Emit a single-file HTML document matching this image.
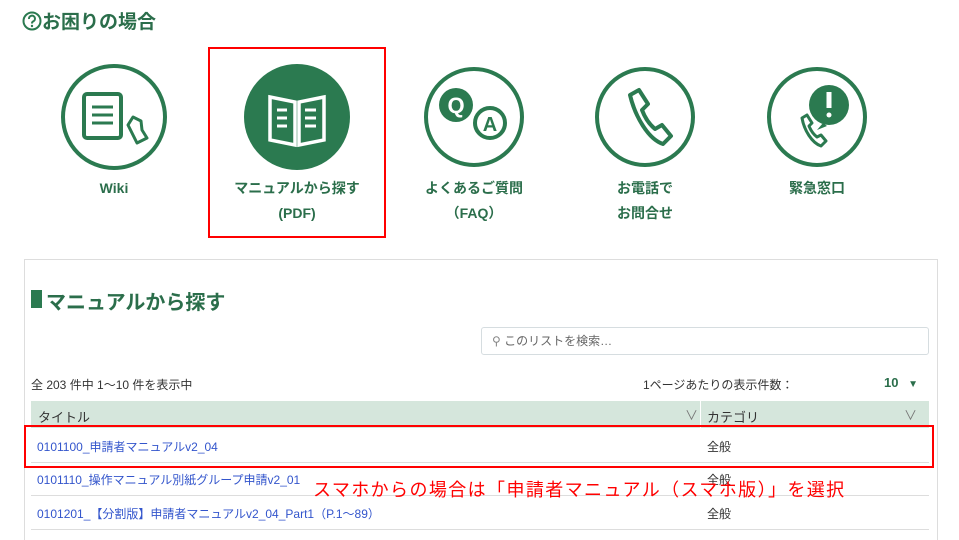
<!DOCTYPE html>
<html><head><meta charset="utf-8"><style>
body{margin:0;width:959px;height:525px;overflow:hidden;background:#fff;font-family:"Liberation Sans","Noto Sans CJK JP",sans-serif;position:relative}
.a{position:absolute}
.lbl{position:absolute;width:170px;text-align:center;font-size:14px;font-weight:bold;color:#2b6e4b;line-height:25px}
.row{position:absolute;left:31px;width:898px;height:33px;border-bottom:1px solid #ddd;font-size:12px}
.row span{position:absolute;top:9px}
</style></head><body>
<div class="a" style="left:22px;top:7px;font-size:19px;font-weight:bold;color:#2b6e4b">
<svg width="20" height="20" viewBox="0 0 20 20" style="vertical-align:-3px"><circle cx="10" cy="10" r="8.5" fill="none" stroke="#2b7a50" stroke-width="2"/><path d="M7 8a3 3 0 1 1 4 2.5c-1 .5-1 1-1 2" fill="none" stroke="#2b7a50" stroke-width="2"/><circle cx="10" cy="15" r="1.2" fill="#2b7a50"/></svg>お困りの場合</div>

<svg class="a" style="left:0;top:0" width="959" height="240">
<g fill="none" stroke="#2b7a50" stroke-width="4">
<circle cx="114" cy="117" r="51"/>
<circle cx="474" cy="117" r="48"/>
<circle cx="645" cy="117" r="48"/>
<circle cx="817" cy="117" r="48"/>
</g>
<circle cx="297" cy="117" r="53" fill="#2b7a50"/>
<rect x="84" y="94" width="37" height="44" rx="3" fill="none" stroke="#2b7a50" stroke-width="4"/>
<path d="M92 107h21M92 115h21M92 123h21" stroke="#2b7a50" stroke-width="3"/>
<path d="M128 125l5-8 8 4 1 9 5 8-10 5z" fill="none" stroke="#2b7a50" stroke-width="3" stroke-linejoin="round"/>
<path d="M270 97l25 5v43l-25-5zM324 97l-25 5v43l25-5z" fill="none" stroke="#fff" stroke-width="3.5"/>
<path d="M277 110h10M277 118h10M277 126h10M305 110h11M305 118h11M305 126h11" stroke="#fff" stroke-width="3"/>
<circle cx="456" cy="105" r="17" fill="#2b7a50"/>
<text x="456" y="113" text-anchor="middle" font-family="Liberation Sans" font-weight="bold" font-size="22" fill="#fff">Q</text>
<circle cx="490" cy="123" r="15" fill="#fff" stroke="#2b7a50" stroke-width="4"/>
<text x="490" y="131" text-anchor="middle" font-family="Liberation Sans" font-weight="bold" font-size="20" fill="#2b7a50">A</text>
<path d="M630 95l9-5 9 14-6 6c3 8 7 14 13 19l7-4 9 11-8 8c-15-5-28-28-33-49z" fill="none" stroke="#2b7a50" stroke-width="4" stroke-linejoin="round"/>
<circle cx="829" cy="105" r="20" fill="#2b7a50"/>
<path d="M823 123l-6 7 10-4z" fill="#2b7a50"/>
<path d="M829 92v16" stroke="#fff" stroke-width="5"/><circle cx="829" cy="115" r="2.5" fill="#fff"/>
<path d="M802 118l5-3 5 8-3 3c2 5 4 8 8 11l4-2 5 6-5 5c-9-3-17-16-19-28z" fill="none" stroke="#2b7a50" stroke-width="3" stroke-linejoin="round"/>
</svg>

<div class="lbl" style="left:29px;top:176px">Wiki</div>
<div class="lbl" style="left:212px;top:176px">マニュアルから探す<br>(PDF)</div>
<div class="lbl" style="left:389px;top:176px">よくあるご質問<br>（FAQ）</div>
<div class="lbl" style="left:560px;top:176px">お電話で<br>お問合せ</div>
<div class="lbl" style="left:732px;top:176px">緊急窓口</div>

<div class="a" style="left:208px;top:47px;width:174px;height:187px;border:2px solid #f00"></div>

<div class="a" style="left:24px;top:259px;width:912px;height:280px;border:1px solid #ddd;border-bottom:none"></div>
<div class="a" style="left:31px;top:290px;width:11px;height:18px;background:#2b7a50"></div>
<div class="a" style="left:46px;top:286px;font-size:20px;font-weight:bold;color:#2b6e4b">マニュアルから探す</div>
<div class="a" style="left:481px;top:327px;width:446px;height:26px;border:1px solid #d6dde0;border-radius:3px;font-size:12px;color:#666;line-height:26px">
<span style="margin-left:10px;color:#888">&#9906;</span> このリストを検索…</div>
<div class="a" style="left:31px;top:376px;font-size:12px;color:#333">全 203 件中 1～10 件を表示中</div>
<div class="a" style="left:643px;top:376px;font-size:12px;color:#333">1ページあたりの表示件数：</div>
<div class="a" style="left:884px;top:375px;font-size:13px;font-weight:bold;color:#2b6e4b">10 <span style="font-size:10px;margin-left:6px">▼</span></div>
<div class="a" style="left:31px;top:401px;width:898px;height:27px;background:#d5e6dc;font-size:13px;color:#333">
<span class="a" style="left:7px;top:6px">タイトル</span><span class="a" style="left:654px;top:4px;color:#777">∨</span>
<div class="a" style="left:669px;top:0;width:1px;height:27px;background:#fff"></div>
<span class="a" style="left:676px;top:6px">カテゴリ</span><span class="a" style="left:873px;top:4px;color:#777">∨</span></div>
<div class="row" style="top:429px"><span style="left:6px;color:#3355cc">0101100_申請者マニュアルv2_04</span><span style="left:676px;color:#333">全般</span></div>
<div class="row" style="top:462px"><span style="left:6px;color:#3355cc">0101110_操作マニュアル別紙グループ申請v2_01</span><span style="left:676px;color:#333">全般</span></div>
<div class="row" style="top:496px"><span style="left:6px;color:#3355cc">0101201_【分割版】申請者マニュアルv2_04_Part1（P.1～89）</span><span style="left:676px;color:#333">全般</span></div>
<div class="a" style="left:24px;top:425px;width:906px;height:39px;border:2px solid #f00"></div>
<div class="a" style="left:313px;top:476px;font-size:18px;letter-spacing:1.4px;color:#f00">スマホからの場合は「申請者マニュアル（スマホ版）」を選択</div>
</body></html>
